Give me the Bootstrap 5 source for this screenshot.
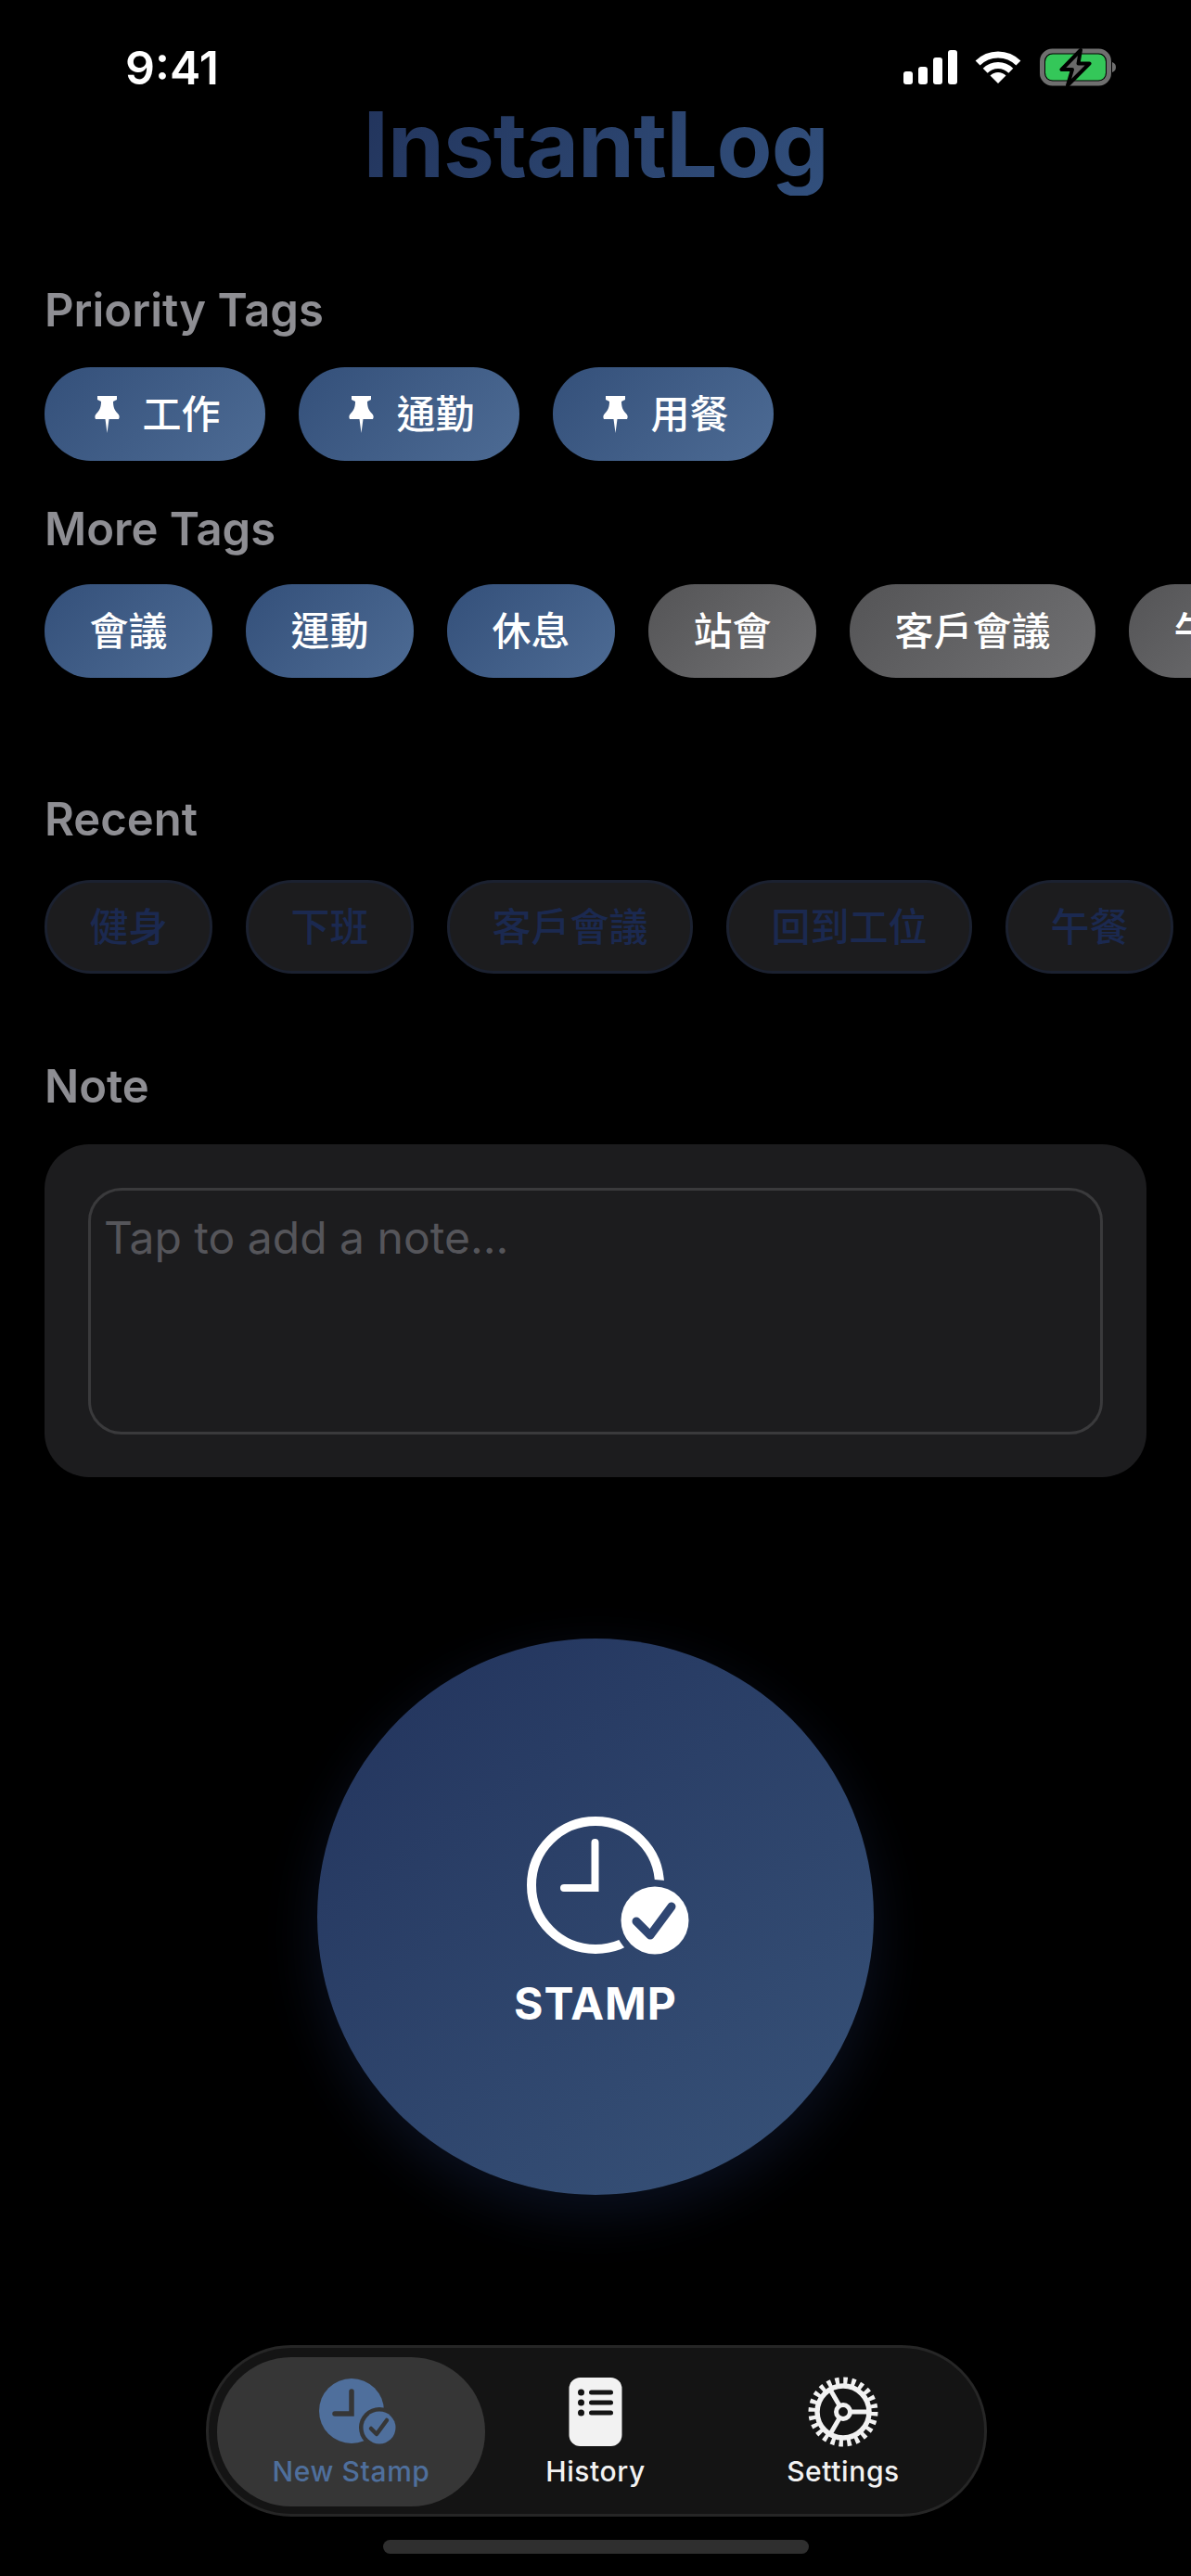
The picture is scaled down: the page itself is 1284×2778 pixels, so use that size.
<!DOCTYPE html>
<html lang="zh-Hant">
<head>
<meta charset="utf-8">
<title>InstantLog</title>
<link href="https://cdn.jsdelivr.net/npm/bootstrap@5.3.0/dist/css/bootstrap.min.css" rel="stylesheet">
<style>
html,body{background:#000;margin:0;height:2778px;overflow:hidden}
body{font-family:"Inter","Noto Sans CJK TC",sans-serif;color:#fff}
.phone{width:1284px;height:2778px;overflow:hidden}
.status{height:101px;padding:48px 79px 0 135px}
.clock-time{font-size:50px;font-weight:600;line-height:50px}
.status-icons{gap:19px}
.ico-signal,.ico-wifi{margin-top:6px}
.ico-batt{margin-top:4px;margin-left:1px}
.app-title{font-size:98px;font-weight:700;line-height:110px;margin:0 0 94px;letter-spacing:-1px;background:linear-gradient(135deg,#22345c,#32507d);-webkit-background-clip:text;background-clip:text;color:transparent}
.sec-label{font-size:49px;font-weight:600;line-height:60px;color:#8e8e93;margin:0 0 31px 48px}
.lbl-more{margin-bottom:29px}
.lbl-recent{margin-bottom:35px}
.lbl-note{margin-bottom:32px}
.chip-row{gap:36px;padding-left:48px;height:101px;overflow:hidden}
.row-pri{margin-bottom:44px}
.row-more{margin-bottom:123px}
.row-recent{margin-bottom:92px}
.tag-chip{flex:none;height:101px;padding:0 48.5px;border-radius:50px;font-size:42px;font-weight:500;border:0;color:#fff;display:flex;align-items:center}
.tag-blue{background:linear-gradient(135deg,#34507a,#4d6b94)}
.tag-grey{background:linear-gradient(135deg,#545456,#717173)}
.tag-dim{background:#1c1c1e;border:3px solid #1b2130;color:#1b2950;padding:0 45.5px}
.pin-ico{margin:0 25px 0 5px}
.note-wrap{margin:0 48px;height:359px;background:#1c1c1e;border-radius:48px;padding:47px}
.note-input{height:266px;background:#1c1c1e;border:3px solid #3a3a3c;border-radius:36px;padding:21px 14px;font-size:48px;line-height:60px;color:#fff;resize:none}
.note-input::placeholder{color:#55555a;opacity:1}
.note-input:focus{background:#1c1c1e;border-color:#3a3a3c;box-shadow:none}
.stamp-zone{margin-top:174px}
.stamp-btn{width:600px;height:600px;border-radius:50%;border:0;padding:188px 0 0;background:linear-gradient(145deg,#22335c,#385379);color:#fff;box-shadow:0 20px 60px rgba(40,62,120,.28)}
.stamp-ico{margin-left:24px}
.stamp-text{font-size:48px;font-weight:700;line-height:60px;margin-top:20px;letter-spacing:1px}
.tab-dock{margin-top:162px}
.tab-shell{width:842px;height:185px;margin-left:2px;background:#141414;border:3px solid #262626;border-radius:92px;padding:10px 4px 8px 9px}
.tab-item{height:161px;padding-top:21px;color:#f2f2f2;font-size:30px;font-weight:500;line-height:36px;letter-spacing:.6px}
.tab-on{width:289px;background:#363636;border-radius:80px;color:#4f6f9c}
.tab-mid{width:238px}
.tab-end{width:296px}
.tab-svg{height:76px;margin-bottom:8px}
.tab-svg-on{margin-left:20px}
.home-bar{width:459px;height:15px;background:#2f2f2f;border-radius:8px;margin-top:25px}
</style>
</head>
<body>
<div class="phone d-flex flex-column">
  <div class="status d-flex justify-content-between align-items-start">
    <span class="clock-time">9:41</span>
    <div class="status-icons d-flex align-items-start">
      <svg class="ico-signal" width="58" height="38" viewBox="0 0 58 38" fill="#fff"><rect x="0" y="23" width="10" height="14" rx="3"/><rect x="16" y="18" width="10" height="19" rx="3"/><rect x="32" y="8" width="10" height="29" rx="3"/><rect x="48" y="0" width="10" height="37" rx="3"/></svg>
      <svg class="ico-wifi" width="50" height="38" viewBox="0 0 50 38" fill="none"><path d="M3.1 14.1A31 31 0 0 1 46.9 14.1" stroke="#fff" stroke-width="7"/><path d="M11.2 22.2A19.5 19.5 0 0 1 38.8 22.2" stroke="#fff" stroke-width="7"/><path d="M25 36L16.5 27.5A12 12 0 0 1 33.5 27.5Z" fill="#fff"/></svg>
      <svg class="ico-batt" width="84" height="42" viewBox="0 0 84 42"><rect x="2.5" y="3" width="72" height="35" rx="11" fill="none" stroke="#6f6f6f" stroke-width="5"/><rect x="6" y="6.500" width="65" height="28" rx="8" fill="#34c759"/><path d="M78 15c3 1 4 3 4 5.500s-1 4.500-4 5.500z" fill="#6f6f6f"/><path d="M44 2L23.500 23H35L30 40L53.500 16.500H41.500Z" fill="#6a6a6a" stroke="#000" stroke-width="4" stroke-linejoin="round"/></svg>
    </div>
  </div>
  <h1 class="app-title text-center align-self-center">InstantLog</h1>

  <div class="sec-label">Priority Tags</div>
  <div class="chip-row row-pri d-flex">
    <div class="tag-chip tag-blue"><svg class="pin-ico" width="27" height="40" viewBox="0 0 27 40" fill="#fff"><path d="M3 0H24V4L20 6C20 11 21 15 25 19C27 21 27 23 26 25H15.500L13.500 40L11.500 25H1C0 23 0 21 2 19C6 15 7 11 7 6L3 4Z"/></svg>工作</div>
    <div class="tag-chip tag-blue"><svg class="pin-ico" width="27" height="40" viewBox="0 0 27 40" fill="#fff"><path d="M3 0H24V4L20 6C20 11 21 15 25 19C27 21 27 23 26 25H15.500L13.500 40L11.500 25H1C0 23 0 21 2 19C6 15 7 11 7 6L3 4Z"/></svg>通勤</div>
    <div class="tag-chip tag-blue"><svg class="pin-ico" width="27" height="40" viewBox="0 0 27 40" fill="#fff"><path d="M3 0H24V4L20 6C20 11 21 15 25 19C27 21 27 23 26 25H15.500L13.500 40L11.500 25H1C0 23 0 21 2 19C6 15 7 11 7 6L3 4Z"/></svg>用餐</div>
  </div>

  <div class="sec-label lbl-more">More Tags</div>
  <div class="chip-row row-more d-flex">
    <div class="tag-chip tag-blue">會議</div>
    <div class="tag-chip tag-blue">運動</div>
    <div class="tag-chip tag-blue">休息</div>
    <div class="tag-chip tag-grey">站會</div>
    <div class="tag-chip tag-grey">客戶會議</div>
    <div class="tag-chip tag-grey">午餐</div>
  </div>

  <div class="sec-label lbl-recent">Recent</div>
  <div class="chip-row row-recent d-flex">
    <div class="tag-chip tag-dim">健身</div>
    <div class="tag-chip tag-dim">下班</div>
    <div class="tag-chip tag-dim">客戶會議</div>
    <div class="tag-chip tag-dim">回到工位</div>
    <div class="tag-chip tag-dim">午餐</div>
  </div>

  <div class="sec-label lbl-note">Note</div>
  <div class="note-wrap">
    <textarea class="form-control note-input" placeholder="Tap to add a note..."></textarea>
  </div>

  <div class="stamp-zone d-flex justify-content-center">
    <button type="button" class="btn stamp-btn d-flex flex-column align-items-center">
      <svg class="stamp-ico" width="180" height="156" viewBox="0 0 180 156" fill="none">
        <defs><mask id="cut"><rect width="180" height="156" fill="#fff"/><circle cx="142" cy="116" r="44" fill="#000"/></mask></defs>
        <circle cx="78" cy="78" r="69" stroke="#fff" stroke-width="10" mask="url(#cut)"/>
        <path d="M77.500 32V81H44" stroke="#fff" stroke-width="8" stroke-linecap="round"/>
        <circle cx="142" cy="116" r="36.500" fill="#fff"/>
        <path d="M122 117L137 132L160 101" stroke="#2f4672" stroke-width="9" stroke-linecap="round" stroke-linejoin="round"/>
      </svg>
      <span class="stamp-text">STAMP</span>
    </button>
  </div>

  <nav class="tab-dock d-flex flex-column align-items-center">
    <div class="tab-shell d-flex">
      <div class="tab-item tab-on d-flex flex-column align-items-center">
        <svg class="tab-svg tab-svg-on" width="90" height="76" viewBox="0 0 90 76">
          <circle cx="35" cy="37" r="35" fill="#4f6f9c"/>
          <path d="M35 16V40H17" fill="none" stroke="#363636" stroke-width="5.500" stroke-linecap="round"/>
          <circle cx="65" cy="55" r="22" fill="#363636"/>
          <circle cx="65" cy="55" r="17.500" fill="#4f6f9c"/>
          <path d="M56 56L62 62L73 47" fill="none" stroke="#363636" stroke-width="4.500" stroke-linecap="round" stroke-linejoin="round"/>
        </svg>
        <span>New Stamp</span>
      </div>
      <div class="tab-item tab-mid d-flex flex-column align-items-center">
        <svg class="tab-svg" width="58" height="76" viewBox="0 0 58 76">
          <rect x="0.500" y="1" width="57" height="74" rx="12" fill="#f2f2f2"/>
          <g fill="#141414"><circle cx="13.500" cy="17" r="3.500"/><circle cx="13.500" cy="28" r="3.500"/><circle cx="13.500" cy="39" r="3.500"/><rect x="22" y="14.500" width="26" height="5" rx="2.500"/><rect x="22" y="25.500" width="26" height="5" rx="2.500"/><rect x="22" y="36.500" width="26" height="5" rx="2.500"/></g>
        </svg>
        <span>History</span>
      </div>
      <div class="tab-item tab-end d-flex flex-column align-items-center">
        <svg class="tab-svg" width="76" height="76" viewBox="0 0 76 76" fill="none" stroke="#f2f2f2">
          <circle cx="38" cy="38" r="33" stroke-width="9" stroke-dasharray="4.300 4.340"/>
          <circle cx="38" cy="38" r="28" stroke-width="5.500"/>
          <path d="M38 38H66M38 38L24 14M38 38L24 62" stroke-width="5"/>
          <circle cx="38" cy="38" r="7.500" fill="#141414" stroke-width="5"/>
        </svg>
        <span>Settings</span>
      </div>
    </div>
    <div class="home-bar"></div>
  </nav>
</div>
<script src="https://cdn.jsdelivr.net/npm/bootstrap@5.3.0/dist/js/bootstrap.bundle.min.js"></script>
</body>
</html>
